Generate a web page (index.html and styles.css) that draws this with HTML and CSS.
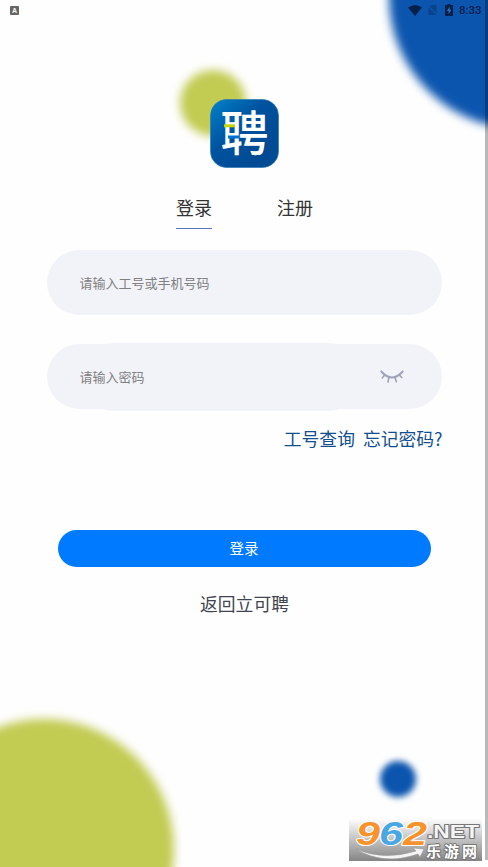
FILE: index.html
```html
<!DOCTYPE html>
<html lang="zh-CN">
<head>
  <meta charset="UTF-8">
  <meta name="viewport" content="width=device-width, initial-scale=1.0">
  <title>登录</title>
  <link rel="stylesheet" href="styles.css">
</head>
<body>
  <div class="page">
    <!-- 背景圆 -->
    <div class="circle circle-top"></div>
    <div class="circle circle-logo"></div>
    <div class="circle circle-bottom"></div>
    <div class="circle circle-small"></div>

    <header class="status">
      <span class="status-app">A</span>
      <div class="status-right">
        <svg class="wifi" width="14" height="11" viewBox="0 0 14 11"><path d="M0 2.5Q7-2.5 14 2.5L7 11z"/></svg>
        <svg class="sim" width="11" height="12" viewBox="0 0 11 12"><path d="M4 1h5.5v10H1.5V3.5z"/><path class="slash" d="M0.5 1.5l10 9.5"/></svg>
        <svg class="battery" width="8" height="12" viewBox="0 0 8 12"><path d="M2.5 0h3v1H8v11H0V1h2.5z"/><path class="bolt" d="M4.8 2.5L1.8 7h1.8v3.2L6.4 5.7H4.6z"/></svg>
        <span class="time">8:33</span>
      </div>
    </header>

    <main class="login">
      <svg class="logo" width="69" height="69" viewBox="0 0 69 69">
        <defs>
          <linearGradient id="logoBg" x1="0" y1="0" x2="0.75" y2="0.75">
            <stop offset="0" stop-color="#0083cb"/>
            <stop offset="0.55" stop-color="#00529f"/>
            <stop offset="1" stop-color="#004b94"/>
          </linearGradient>
        </defs>
        <rect x="0.5" y="0.5" width="68" height="68" rx="16" fill="url(#logoBg)" stroke="#2b78b8" stroke-width="0.7"/>
        <text class="logo-text" x="34.5" y="52" text-anchor="middle">聘</text>
        <rect x="14" y="25.3" width="11" height="3" fill="#c3d600"/>
        <rect x="18" y="36.5" width="11" height="3" fill="#0071ce"/>
      </svg>

      <nav class="tabs">
        <a class="tab active">登录</a>
        <a class="tab">注册</a>
      </nav>

      <form class="form">
        <div class="field">
          <input type="text" placeholder="请输入工号或手机号码">
        </div>
        <div class="field field-password">
          <input type="password" placeholder="请输入密码">
          <svg class="eye" width="24" height="14" viewBox="0 0 24 14">
            <path class="lid" d="M1.3 1.5Q12 13.5 22.7 1.5"/>
            <path d="M4.7 5L2.2 8M9 7.2L8 12M15 7.2L16.3 11.7M19.3 5L21.8 7.5"/>
          </svg>
        </div>
        <div class="links">
          <a>工号查询</a>
          <a>忘记密码?</a>
        </div>
        <button type="button" class="submit">登录</button>
      </form>
      <a class="back">返回立可聘</a>
    </main>

    <!-- 滚动条 -->
    <div class="scrollbar"></div>

    <!-- 水印 -->
    <div class="watermark">
      <svg width="133" height="42" viewBox="0 0 133 42">
        <path class="swoosh" d="M7 30Q34 42 67 32L64 29L75 30L71 38L69 35Q34 47 7 30z"/>
        <g class="mark-num">
          <text class="orange" x="7" y="26" textLength="24" lengthAdjust="spacingAndGlyphs">9</text>
          <text class="blue" x="30" y="26" textLength="24" lengthAdjust="spacingAndGlyphs">6</text>
          <text class="orange" x="54" y="26" textLength="24" lengthAdjust="spacingAndGlyphs">2</text>
        </g>
        <text class="mark-net" x="78" y="19" textLength="52" lengthAdjust="spacingAndGlyphs">.NET</text>
        <text class="mark-name" x="77" y="37.5" textLength="51">乐游网</text>
      </svg>
    </div>
  </div>
</body>
</html>
```
FILE: styles.css
```css
* { margin: 0; padding: 0; box-sizing: border-box; }
body {
  font-family: "Noto Sans CJK SC", sans-serif;
  background: #fefefe;
  color: #333;
}
.page {
  position: relative;
  height: 867px;
  overflow: hidden;
}
/* 背景圆 */
.circle {
  position: absolute;
  border-radius: 50%;
  background: #0c55ae;
}
.circle-top {
  left: 389px;
  top: -135px;
  width: 264px;
  height: 264px;
  filter: blur(5px);
}
.circle-logo {
  left: 180px;
  top: 70px;
  width: 66px;
  height: 66px;
  background: #c2cb52;
  filter: blur(5px);
}
.circle-bottom {
  left: -86px;
  top: 719px;
  width: 260px;
  height: 260px;
  background: #c2cb52;
  filter: blur(5px);
}
.circle-small {
  left: 380px;
  top: 761px;
  width: 36px;
  height: 36px;
  filter: blur(3px);
}
.status {
  position: relative;
  display: flex;
  justify-content: space-between;
  align-items: center;
  height: 20px;
  padding: 0 7px 0 10px;
}
.status-app {
  width: 9px;
  height: 9px;
  border-radius: 1px;
  background: #666;
  color: #fff;
  font: bold 7px/9px "Liberation Sans", sans-serif;
  text-align: center;
}
.status-right {
  display: flex;
  align-items: center;
  fill: #04214a;
}
.sim { margin-left: 5px; fill: #094389; }
.slash { stroke: #0c55ae; stroke-width: 1.3; }
.battery { margin-left: 7px; }
.bolt { fill: #3370b8; }
.time {
  margin-left: 6px;
  width: 22px;
  color: #04214a;
  font: 500 11.5px/20px Roboto, sans-serif;
  white-space: nowrap;
}
.login {
  position: relative;
  display: flex;
  flex-direction: column;
  align-items: center;
  padding-top: 79px;
}
.logo { display: block; overflow: visible; }
.logo-text {
  font-size: 48px;
  font-weight: 500;
  fill: #fff;
}
.tabs {
  display: flex;
  gap: 65px;
  margin-top: 26px;
  padding-left: 1px;
}
.tab {
  height: 35px;
  font-size: 18px;
  line-height: 27px;
  border-bottom: 1.5px solid transparent;
}
.tab.active { border-color: #5577c0; }
.form {
  display: flex;
  flex-direction: column;
  align-items: center;
  width: 395px;
  margin-top: 21px;
}
.field {
  display: flex;
  align-items: center;
  width: 395px;
  height: 65px;
  padding: 0 38px 0 33px;
  border-radius: 33px;
  background: #f2f3f8;
}
.field input {
  flex: 1;
  min-width: 0;
  height: 65px;
  padding-bottom: 1px;
  border: none;
  outline: none;
  background: transparent;
  font-family: inherit;
  font-size: 13px;
}
.field input::placeholder { color: #808080; }
.field-password {
  justify-content: space-between;
  margin-top: 29px;
}
.field-password input {
  flex: 0 0 282px;
  height: 68px;
  border-radius: 34px;
  background: #f2f3f8;
}
.eye {
  fill: none;
  stroke: #9fa3b8;
  stroke-width: 1.6;
  stroke-linecap: round;
}
.lid { stroke-width: 2; }
.links {
  display: flex;
  align-self: flex-end;
  gap: 8px;
  margin: 16px -1px 0 0;
  color: #124f8f;
  font-size: 17.8px;
  line-height: 26px;
}
.submit {
  width: 373px;
  height: 37px;
  margin-top: 79px;
  padding-bottom: 2px;
  border: none;
  border-radius: 19px;
  background: #007aff;
  color: #fff;
  font-family: inherit;
  font-size: 14.5px;
}
.back {
  margin-top: 23px;
  padding-left: 1px;
  color: #404550;
  font-size: 17.8px;
  line-height: 26px;
}
.scrollbar {
  position: absolute;
  top: 0;
  right: 0;
  width: 3px;
  height: 860px;
  background: rgba(0, 0, 0, 0.27);
}
/* 水印 */
.watermark {
  position: absolute;
  left: 349px;
  top: 819px;
  width: 133px;
  height: 42px;
  background: linear-gradient(#fdfdfd, #858585);
}
.watermark svg { display: block; overflow: visible; }
.watermark text {
  paint-order: stroke;
  stroke-linejoin: round;
}
.mark-num {
  font: italic bold 34px "Liberation Sans", sans-serif;
  stroke: #fff;
  stroke-width: 2;
}
.orange { fill: #f6932c; }
.blue { fill: #4aa7e4; }
.mark-net {
  font: bold 18px "Liberation Sans", sans-serif;
  fill: #f5f5f5;
  stroke: #777;
  stroke-width: 2;
}
.mark-name {
  font-size: 15px;
  font-weight: 700;
  fill: #fff;
  stroke: #777;
  stroke-width: 2;
}
.swoosh { fill: #f5f5f5; stroke: #999; stroke-width: 0.6; }
```
